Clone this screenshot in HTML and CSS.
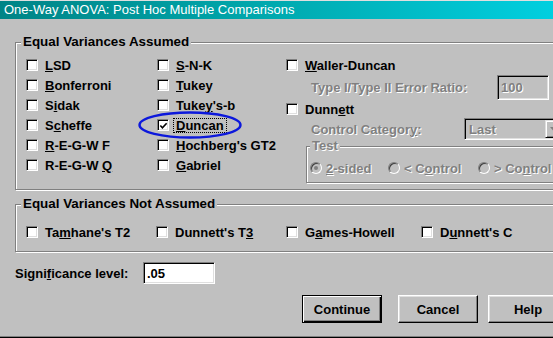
FILE: index.html
```html
<!DOCTYPE html>
<html>
<head>
    <link rel="stylesheet" href="styles.css">
</head>
<body>
<div class="window">
    <div class="titlebar">One-Way ANOVA: Post Hoc Multiple Comparisons</div>

    <div class="client">
        <div class="group assumed">
            <div class="legend">Equal Variances Assumed</div>
            <div class="cols">
                <div class="col col1">
                    <div class="check"><span class="box"></span><span><u>L</u>SD</span></div>
                    <div class="check"><span class="box"></span><span><u>B</u>onferroni</span></div>
                    <div class="check"><span class="box"></span><span>S<u>i</u>dak</span></div>
                    <div class="check"><span class="box"></span><span>S<u>c</u>heffe</span></div>
                    <div class="check"><span class="box"></span><span><u>R</u>-E-G-W F</span></div>
                    <div class="check"><span class="box"></span><span>R-E-G-W <u>Q</u></span></div>
                </div>
                <div class="col col2">
                    <div class="check"><span class="box"></span><span><u>S</u>-N-K</span></div>
                    <div class="check"><span class="box"></span><span><u>T</u>ukey</span></div>
                    <div class="check"><span class="box"></span><span>Tuke<u>y</u>'s-b</span></div>
                    <div class="check">
                        <span class="box checked">
                            <svg width="10" height="10" viewBox="0 0 10 10"><polyline points="1.5,4.5 3.8,7 8.5,2" fill="none" stroke="#000" stroke-width="1.8"/></svg>
                        </span>
                        <span class="focus"><u>D</u>uncan</span>
                    </div>
                    <div class="check"><span class="box"></span><span><u>H</u>ochberg's GT2</span></div>
                    <div class="check"><span class="box"></span><span><u>G</u>abriel</span></div>
                </div>
                <div class="col col3">
                    <div class="check"><span class="box"></span><span><u>W</u>aller-Duncan</span></div>
                    <div class="field ratio">
                        <span class="dim label">Type I/Type II Error Ratio:</span>
                        <span class="edit off"><span class="dim">100</span></span>
                    </div>
                    <div class="check short"><span class="box"></span><span>Dunn<u>e</u>tt</span></div>
                    <div class="field control">
                        <span class="dim label">Control Categor<u>y</u>:</span>
                        <span class="combo">
                            <span class="dim">Last</span>
                            <span class="drop">
                                <svg width="7" height="4" viewBox="0 0 7 4"><polygon points="0,0 7,0 3.5,4" fill="#808080"/></svg>
                            </span>
                        </span>
                    </div>
                    <div class="group test">
                        <div class="legend dim">Test</div>
                        <div class="radios">
                            <div class="radio r1"><span class="dot on"></span><span class="dim"><u>2</u>-sided</span></div>
                            <div class="radio r2"><span class="dot"></span><span class="dim">&lt; C<u>o</u>ntrol</span></div>
                            <div class="radio"><span class="dot"></span><span class="dim">&gt; Co<u>n</u>trol</span></div>
                        </div>
                    </div>
                </div>
            </div>
        </div>

        <div class="group unequal">
            <div class="legend">Equal Variances Not Assumed</div>
            <div class="row2">
                <div class="check w130"><span class="box"></span><span>Ta<u>m</u>hane's T2</span></div>
                <div class="check w130"><span class="box"></span><span>Dunnett's T<u>3</u></span></div>
                <div class="check w135"><span class="box"></span><span>G<u>a</u>mes-Howell</span></div>
                <div class="check"><span class="box"></span><span>D<u>u</u>nnett's C</span></div>
            </div>
        </div>

        <div class="sig">
            <span class="sig-label">Signi<u>f</u>icance level:</span>
            <span class="edit value">.05</span>
        </div>

        <div class="buttons">
            <div class="btn default">Continue</div>
            <div class="btn cancel">Cancel</div>
            <div class="btn help">Help</div>
        </div>
    </div>

    <svg class="mark" width="106" height="30" viewBox="0 0 106 30">
        <ellipse cx="53" cy="15" rx="50.5" ry="12.5" fill="none" stroke="#0c18dc" stroke-width="2.4"/>
    </svg>
</div>
</body>
</html>
```

FILE: styles.css
```css
body {
    margin: 0;
    width: 553px;
    height: 338px;
    overflow: hidden;
    background: #c0c0c0;
    font-family: "Liberation Sans", Arial, sans-serif;
    font-size: 13px;
    font-weight: bold;
    color: #000;
}

.window {
    position: relative;
    width: 600px;
    height: 338px;
    box-sizing: border-box;
    border-top: 1px solid #dfdfdf;
    border-bottom: 1px solid #000;
    box-shadow: inset 0 -1px 0 #808080;
    display: flex;
    flex-direction: column;
}

.titlebar {
    height: 18px;
    line-height: 18px;
    padding-left: 4px;
    color: #fff;
    font-weight: normal;
    font-size: 13px;
    background: linear-gradient(to right, #008486 0, #00a9ae 270px, #00cfdf 553px);
}

.client {
    display: flex;
    flex-direction: column;
    padding: 0 15px;
}

/* etched group frame */
.group {
    display: flex;
    flex-direction: column;
    border: 1px solid #808080;
    box-shadow: 1px 1px 0 #fff, inset 1px 1px 0 #fff;
}

.legend {
    align-self: flex-start;
    margin: -9px 0 0 5px;
    padding: 0 2px;
    line-height: 16px;
    font-size: 13.4px;
    background: #c0c0c0;
}

.assumed {
    margin-top: 23px;
    padding-bottom: 6px;
}

.cols {
    display: flex;
    margin-top: 5px;
}

.col1 {
    width: 131px;
    padding-left: 10px;
}

.col2 {
    width: 129px;
}

.col3 {
    flex: 1;
    display: flex;
    flex-direction: column;
}

.check {
    display: flex;
    align-items: center;
    height: 20px;
    white-space: nowrap;
}

.check.short {
    height: 18px;
}

.box {
    flex: none;
    width: 12px;
    height: 12px;
    box-sizing: border-box;
    margin-right: 7px;
    background: #fff;
    border: 1px solid;
    border-color: #808080 #fff #fff #808080;
    box-shadow: inset 1px 1px 0 #000, inset -1px -1px 0 #dfdfdf;
    display: flex;
    align-items: center;
    justify-content: center;
}

.box svg {
    margin: 1px 0 0 1px;
}

.focus {
    border: 1px dotted #000;
    padding: 0 2px;
    margin-left: -3px;
    line-height: 13px;
}

.dim {
    color: #808080;
    text-shadow: 1px 1px 0 #fff;
}

.field {
    display: flex;
    align-items: center;
    padding-left: 25px;
    white-space: nowrap;
}

.ratio {
    height: 25px;
}

.ratio .label {
    width: 186px;
}

.control {
    height: 22px;
}

.control .label {
    width: 153px;
}

/* sunken edit boxes */
.edit {
    box-sizing: border-box;
    border: 1px solid;
    border-color: #808080 #fff #fff #808080;
    box-shadow: inset 1px 1px 0 #000, inset -1px -1px 0 #dfdfdf;
    display: flex;
    align-items: center;
    padding-left: 3px;
}

.edit.off {
    width: 52px;
    height: 25px;
    background: #c0c0c0;
}

.combo {
    box-sizing: border-box;
    width: 99px;
    height: 22px;
    border: 1px solid;
    border-color: #808080 #fff #fff #808080;
    box-shadow: inset 1px 1px 0 #000, inset -1px -1px 0 #dfdfdf;
    display: flex;
    align-items: center;
    padding: 1px 1px 1px 4px;
}

.drop {
    margin-left: auto;
    width: 16px;
    height: 18px;
    box-sizing: border-box;
    border: 1px solid;
    border-color: #dfdfdf #000 #000 #dfdfdf;
    box-shadow: inset 1px 1px 0 #fff, inset -1px -1px 0 #808080;
    display: flex;
    align-items: center;
    justify-content: center;
}

.test {
    margin: 6px 0 0 20px;
    width: 270px;
    padding-bottom: 4px;
}

.test .legend {
    margin: -8px 0 0 3px;
    line-height: 14px;
    font-size: 13px;
}

.radios {
    display: flex;
    margin-top: 5px;
    padding-left: 3px;
    height: 20px;
}

.radio {
    display: flex;
    align-items: center;
    white-space: nowrap;
}

.r1 {
    width: 78px;
}

.r2 {
    width: 90px;
}

.dot {
    flex: none;
    width: 12px;
    height: 12px;
    box-sizing: border-box;
    margin-right: 4px;
    border-radius: 50%;
    border: 1px solid;
    border-color: #808080 #fff #fff #808080;
    box-shadow: inset 1px 1px 0 #404040;
    background: #c0c0c0;
    display: flex;
    align-items: center;
    justify-content: center;
}

.dot.on::after {
    content: "";
    width: 4px;
    height: 4px;
    border-radius: 50%;
    background: #808080;
}

.unequal {
    margin-top: 14px;
    padding-bottom: 9px;
}

.row2 {
    display: flex;
    margin-top: 10px;
    padding-left: 10px;
}

.w130 {
    width: 130px;
}

.w135 {
    width: 135px;
}

.sig {
    display: flex;
    align-items: center;
    height: 22px;
    margin-top: 10px;
}

.sig-label {
    width: 128px;
}

.edit.value {
    width: 72px;
    height: 22px;
    background: #fff;
}

.buttons {
    display: flex;
    margin-top: 11px;
    padding-left: 287px;
}

.btn {
    width: 80px;
    height: 28px;
    box-sizing: border-box;
    display: flex;
    align-items: center;
    justify-content: center;
    border: 1px solid;
    border-color: #fff #000 #000 #fff;
    box-shadow: inset -1px -1px 0 #808080, inset 1px 1px 0 #dfdfdf;
}

.btn.default {
    border-color: #000;
    box-shadow: inset 1px 1px 0 #fff, inset -1px -1px 0 #000, inset -2px -2px 0 #808080;
}

.cancel {
    margin-left: 16px;
}

.help {
    margin-left: 10px;
}

.mark {
    position: absolute;
    left: 137px;
    top: 109px;
}
```
